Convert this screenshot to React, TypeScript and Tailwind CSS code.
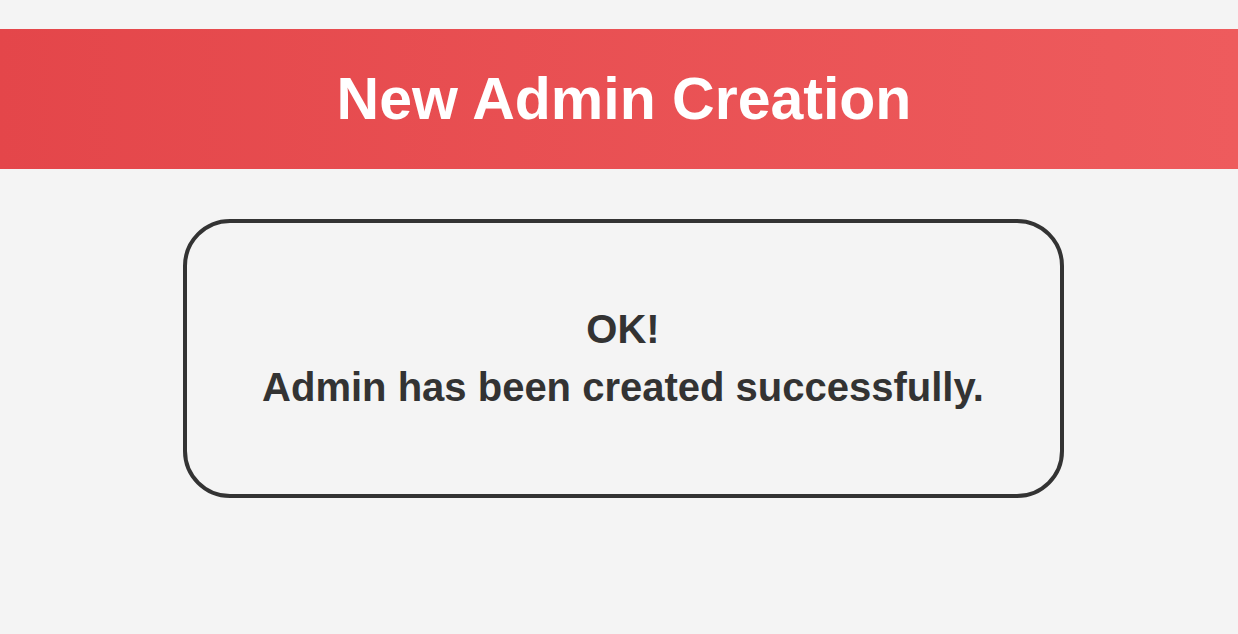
const App = () => {
  return (
    <div className="min-h-[634px] bg-[#f4f4f4] pt-[29px] font-['Liberation_Sans',Arial,sans-serif]">
      <header className="flex h-[140px] items-center justify-center bg-gradient-to-r from-[#e4464a] to-[#ee5b5d] pl-[10px]">
        <h1 className="text-[59px] font-bold leading-none text-white">New Admin Creation</h1>
      </header>
      <main className="flex justify-center pl-[8px] pt-[50px]">
        <div className="flex h-[279px] w-[881px] flex-col items-center justify-center rounded-[47px] border-4 border-[#333333] pb-[2px] text-[40px] font-bold leading-[58px] text-[#333333]">
          <p>OK!</p>
          <p>Admin has been created successfully.</p>
        </div>
      </main>
    </div>
  );
};

export default App;
